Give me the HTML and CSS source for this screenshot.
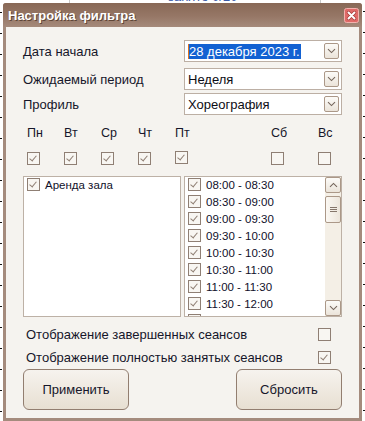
FILE: index.html
```html
<!DOCTYPE html>
<html lang="ru">
<head>
<meta charset="utf-8">
<title>Настройка фильтра</title>
<link rel="stylesheet" href="styles.css">
</head>
<body>
<div class="bgtext">занято 0/20</div>
<div class="bgline bgline-a"></div>
<div class="bgline bgline-b"></div>

<div class="window">
  <div class="titlebar">
    <span class="title">Настройка фильтра</span>
    <span class="close">
      <svg width="15" height="15" viewBox="0 0 15 15">
        <rect x="0.5" y="0.5" width="14" height="14" rx="2" fill="#e06a68" stroke="#f3b2ae"/>
        <path d="M4.5 4.5 L10.5 10.5 M10.5 4.5 L4.5 10.5" stroke="#a53a38" stroke-width="3.4" stroke-linecap="round"/>
        <path d="M4.5 4.5 L10.5 10.5 M10.5 4.5 L4.5 10.5" stroke="#ffffff" stroke-width="2" stroke-linecap="round"/>
      </svg>
    </span>
  </div>
  <div class="body">
    <div class="form">
      <div class="frow frow-1">
        <span class="flabel">Дата начала</span>
        <div class="combo">
          <span class="cval"><span class="caret"></span><span class="sel">28 декабря 2023 г.</span></span>
          <span class="dd"><svg width="9" height="6" viewBox="0 0 9 6"><polyline points="1,1.2 4.5,4.6 8,1.2" fill="none" stroke="#75665c" stroke-width="1.1"/></svg></span>
        </div>
      </div>
      <div class="frow frow-2">
        <span class="flabel">Ожидаемый период</span>
        <div class="combo">
          <span class="cval">Неделя</span>
          <span class="dd"><svg width="9" height="6" viewBox="0 0 9 6"><polyline points="1,1.2 4.5,4.6 8,1.2" fill="none" stroke="#75665c" stroke-width="1.1"/></svg></span>
        </div>
      </div>
      <div class="frow">
        <span class="flabel">Профиль</span>
        <div class="combo">
          <span class="cval">Хореография</span>
          <span class="dd"><svg width="9" height="6" viewBox="0 0 9 6"><polyline points="1,1.2 4.5,4.6 8,1.2" fill="none" stroke="#75665c" stroke-width="1.1"/></svg></span>
        </div>
      </div>
    </div>

    <div class="days">
      <span class="dlabel">Пн</span><span class="dlabel">Вт</span><span class="dlabel">Ср</span><span class="dlabel">Чт</span><span class="dlabel">Пт</span><span class="dlabel">Сб</span><span class="dlabel">Вс</span>
      <span class="cb on"></span><span class="cb on"></span><span class="cb on"></span><span class="cb on"></span><span class="cb on cb-up"></span><span class="cb"></span><span class="cb"></span>
    </div>

    <div class="lists">
      <div class="list">
        <div class="item"><span class="cb on"></span><span class="itext">Аренда зала</span></div>
      </div>
      <div class="list list-right">
        <div class="items">
          <div class="item"><span class="cb on"></span><span class="itext">08:00 - 08:30</span></div>
          <div class="item"><span class="cb on"></span><span class="itext">08:30 - 09:00</span></div>
          <div class="item"><span class="cb on"></span><span class="itext">09:00 - 09:30</span></div>
          <div class="item"><span class="cb on"></span><span class="itext">09:30 - 10:00</span></div>
          <div class="item"><span class="cb on"></span><span class="itext">10:00 - 10:30</span></div>
          <div class="item"><span class="cb on"></span><span class="itext">10:30 - 11:00</span></div>
          <div class="item"><span class="cb on"></span><span class="itext">11:00 - 11:30</span></div>
          <div class="item"><span class="cb on"></span><span class="itext">11:30 - 12:00</span></div>
          <div class="item"><span class="cb on"></span><span class="itext">12:00 - 12:30</span></div>
        </div>
        <div class="scrollbar">
          <span class="sbtn"><svg width="9" height="6" viewBox="0 0 9 6"><polyline points="1,4.8 4.5,1.4 8,4.8" fill="none" stroke="#75665c" stroke-width="1.1"/></svg></span>
          <span class="thumb"><span class="grip"></span></span>
          <span class="track"></span>
          <span class="sbtn"><svg width="9" height="6" viewBox="0 0 9 6"><polyline points="1,1.2 4.5,4.6 8,1.2" fill="none" stroke="#75665c" stroke-width="1.1"/></svg></span>
        </div>
      </div>
    </div>

    <div class="opts">
      <div class="opt"><span>Отображение завершенных сеансов</span><span class="cb"></span></div>
      <div class="opt"><span>Отображение полностью занятых сеансов</span><span class="cb on"></span></div>
    </div>

    <div class="buttons">
      <button class="btn">Применить</button>
      <button class="btn">Сбросить</button>
    </div>
  </div>
</div>
</body>
</html>
```

FILE: styles.css
```css
* { box-sizing: border-box; }

html, body {
  margin: 0;
  padding: 0;
}

body {
  width: 365px;
  height: 421px;
  overflow: hidden;
  position: relative;
  font-family: "Liberation Sans", Arial, sans-serif;
  color: #16162a;
  background:
    repeating-linear-gradient(to bottom, transparent 0 12px, #111 12px 13px, transparent 13px 21px) left top / 2px 100% no-repeat,
    repeating-linear-gradient(to bottom, transparent 0 11px, #111 11px 12px, transparent 12px 21px) right top / 2px 100% no-repeat,
    #ffffff;
}

.bgtext {
  position: absolute;
  left: 168px;
  top: -11px;
  font-size: 13px;
  color: #3b5aa8;
}

.bgline {
  position: absolute;
  top: 0;
  width: 1px;
  height: 4px;
  background: #c9c9c9;
}
.bgline-a { left: 69px; }
.bgline-b { left: 320px; }

.window {
  position: absolute;
  left: 3px;
  top: 3px;
  width: 359px;
  height: 418px;
  display: flex;
  flex-direction: column;
  background: #a48b7d;
  border-radius: 3px 3px 0 0;
}

.titlebar {
  height: 24px;
  flex: none;
  display: flex;
  align-items: center;
  justify-content: space-between;
  padding: 0 3px 0 5px;
  border-radius: 3px 3px 0 0;
  background: linear-gradient(#886856, #967766 55%, #a58a7b);
}

.title {
  font-weight: bold;
  font-size: 13px;
  color: #ffffff;
  text-shadow: 1px 1px 0 #5e4536;
  padding-top: 1px;
}

.close {
  display: flex;
  width: 15px;
  height: 15px;
}

.body {
  flex: 1;
  margin: 0 3px 3px;
  background: #f5f3ef;
  padding: 13px 17px 0 17px;
  display: flex;
  flex-direction: column;
}

/* form */
.form {
  display: flex;
  flex-direction: column;
}

.frow {
  display: flex;
  align-items: center;
  height: 22px;
}
.frow-1 { margin-bottom: 6px; }
.frow-2 { margin-bottom: 3px; }

.flabel {
  width: 161px;
  font-size: 13px;
}

.combo {
  width: 158px;
  height: 22px;
  border: 1px solid #bcafa4;
  background: #ffffff;
  display: flex;
  align-items: center;
  justify-content: space-between;
  padding: 0 2px 0 3px;
}

.cval {
  font-size: 13px;
  color: #0c0c14;
  display: flex;
  align-items: center;
}

.caret {
  width: 1px;
  height: 15px;
  background: #e0741e;
}

.sel {
  background: #1261d2;
  color: #ffffff;
  height: 15px;
  line-height: 15px;
  padding-right: 1px;
}

.dd, .sbtn {
  width: 15px;
  height: 16px;
  border: 1px solid #ab9888;
  border-radius: 2px;
  background: linear-gradient(#fcfbf8, #ebe4da);
  display: flex;
  align-items: center;
  justify-content: center;
}

/* days */
.days {
  margin-top: 11px;
  padding-left: 4px;
  display: grid;
  grid-template-columns: 37px 37px 37px 37px 96px 47px 20px;
  grid-template-rows: 14px 13px;
  row-gap: 12px;
}

.dlabel {
  font-size: 12.5px;
  line-height: 14px;
}

.cb {
  width: 13px;
  height: 13px;
  border: 1px solid #8f7f74;
  background: #f8f6f2;
  position: relative;
  flex: none;
}
.cb.on::after {
  content: "";
  position: absolute;
  left: 3px;
  top: 1px;
  width: 3px;
  height: 6px;
  border-right: 1px solid #8f7f74;
  border-bottom: 1px solid #8f7f74;
  transform: rotate(40deg);
}
.cb-up { margin-top: -1px; }

/* lists */
.lists {
  margin-top: 11px;
  display: flex;
  gap: 3px;
}

.list {
  width: 158px;
  height: 141px;
  border: 1px solid #bdb1a6;
  background: #ffffff;
  padding: 1px 0 0 3px;
  overflow: hidden;
}

.list-right {
  display: flex;
  padding: 0;
}

.items {
  flex: 1;
  padding: 1px 0 0 3px;
  overflow: hidden;
}

.item {
  display: flex;
  align-items: center;
  height: 17px;
  gap: 5px;
}

.item .cb {
  align-self: flex-start;
}

.itext {
  font-size: 11.5px;
  line-height: 13px;
  margin-top: -3px;
  color: #10102a;
}

.scrollbar {
  width: 16px;
  display: flex;
  flex-direction: column;
  background: #f4efe6;
}

.sbtn {
  width: 16px;
  height: 16px;
  flex: none;
}

.thumb {
  margin-top: 3px;
  height: 27px;
  flex: none;
  border: 1px solid #ab9888;
  border-radius: 2px;
  background: linear-gradient(to right, #fbf8f3, #ece5db);
  display: flex;
  align-items: center;
  justify-content: center;
}

.grip {
  width: 7px;
  height: 5px;
  background: repeating-linear-gradient(to bottom, #85766b 0 1px, transparent 1px 2px);
}

.track { flex: 1; }

/* options */
.opts {
  margin-top: 6px;
  display: flex;
  flex-direction: column;
}

.opt {
  height: 23px;
  display: flex;
  align-items: center;
  justify-content: space-between;
  padding: 0 11px 0 3px;
  font-size: 13px;
}

/* buttons */
.buttons {
  display: flex;
  justify-content: space-between;
  margin-top: 0;
}

.btn {
  width: 106px;
  height: 41px;
  border: 1px solid #927e70;
  border-radius: 6px;
  background: linear-gradient(#f6f3ee, #efe9e0 50%, #e7dfd2);
  font-family: "Liberation Sans", Arial, sans-serif;
  font-size: 13px;
  color: #16162a;
  padding: 0;
}
```
